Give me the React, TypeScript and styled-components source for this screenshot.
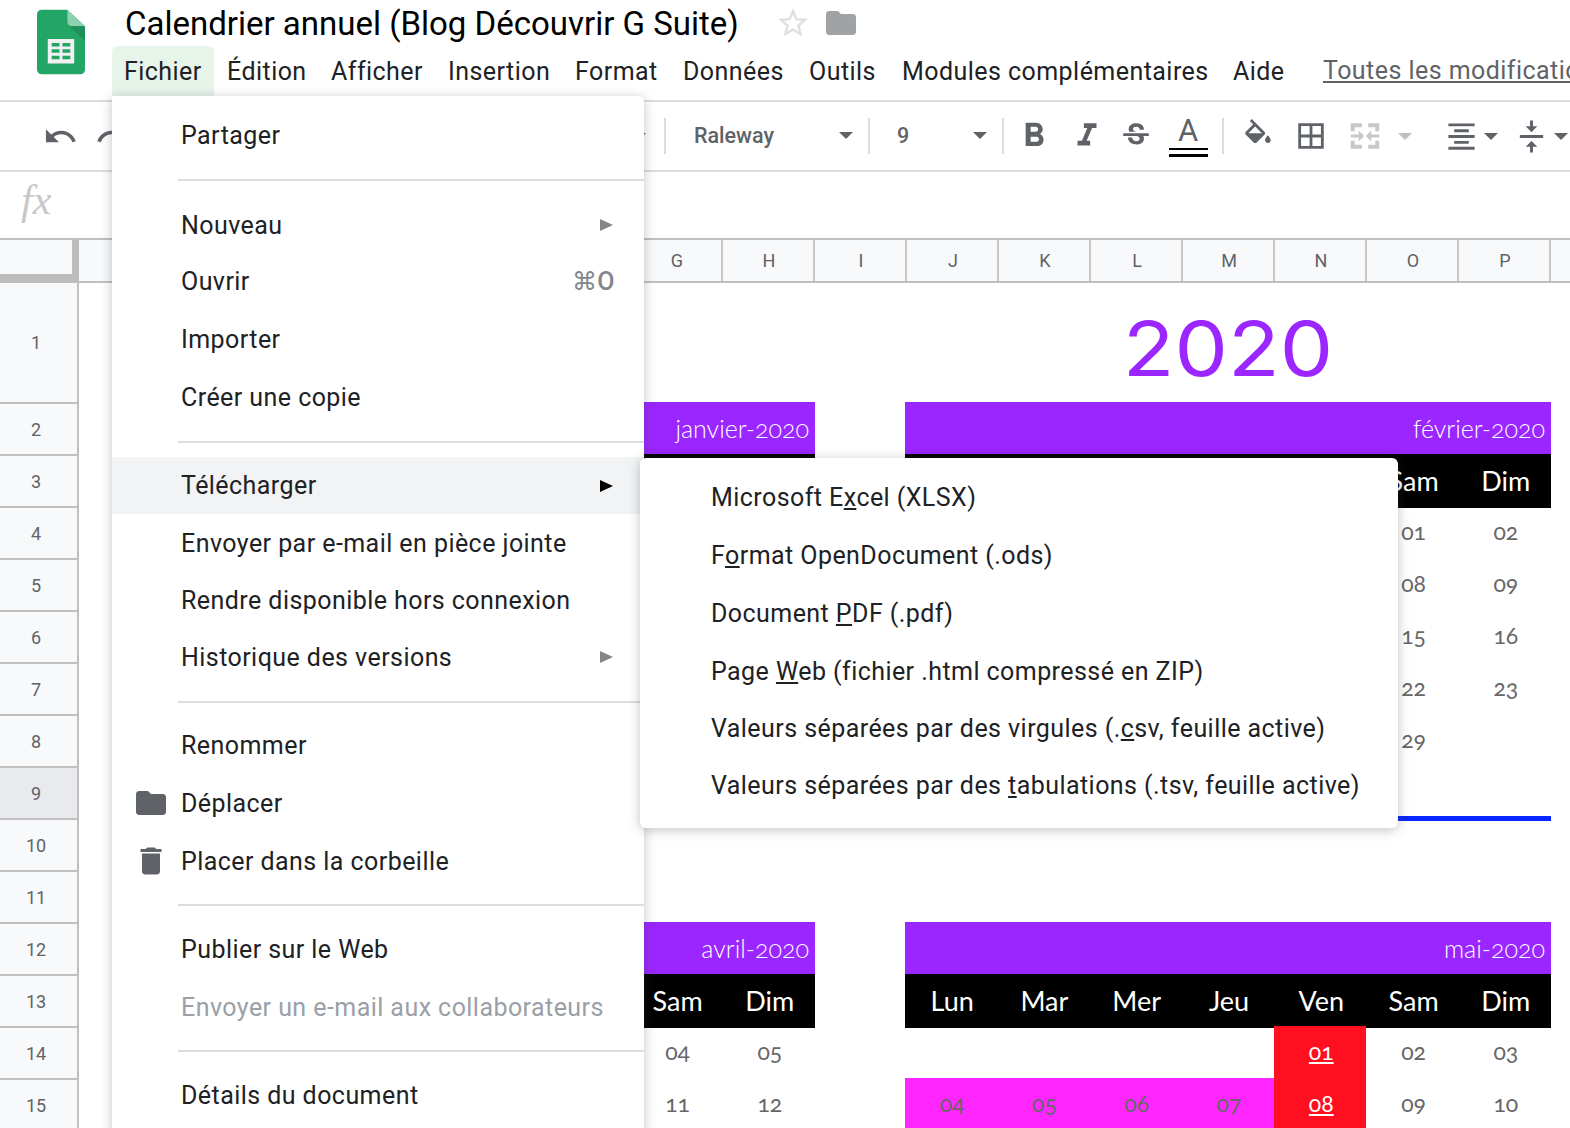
import { createGlobalStyle, styled } from "styled-components";
import {
  MdUndo,
  MdRedo,
  MdFormatBold,
  MdFormatItalic,
  MdStrikethroughS,
  MdBorderAll,
  MdFormatAlignCenter,
  MdVerticalAlignCenter,
  MdFolder,
  MdDelete,
  MdStarBorder,
} from "react-icons/md";

const GlobalStyle = createGlobalStyle`
  * { box-sizing: border-box; }
  html, body { margin: 0; padding: 0; background: #fff; overflow: hidden; }
  body { font-family: "Roboto", "Liberation Sans", sans-serif; }
`;

const Page = styled.div`
  position: relative;
  width: 1570px;
  height: 1128px;
  overflow: hidden;
  background: #fff;
`;

/* header */
const Header = styled.header`
  display: flex;
  height: 102px;
  padding-left: 37px;
  border-bottom: 2px solid #dadce0;
`;
const Logo = styled.svg`
  width: 48px;
  height: 66px;
  margin-top: 9px;
  flex: none;
`;
const HeaderBody = styled.div`
  display: flex;
  flex-direction: column;
  margin-left: 27px;
`;
const TitleRow = styled.div`
  display: flex;
  align-items: center;
  height: 46px;
  padding-left: 13px;
`;
const DocTitle = styled.div`
  font-family: "Roboto", sans-serif;
  font-size: 33px;
  color: #000;
  white-space: nowrap;
  width: 650px;
`;
const StarIcon = styled(MdStarBorder)`
  width: 36px;
  height: 36px;
  color: #e0e0e0;
  flex: none;
`;
const TitleFolder = styled(MdFolder)`
  width: 36px;
  height: 36px;
  color: #a0a3a6;
  margin-left: 12px;
  flex: none;
`;
const MenuBar = styled.nav`
  display: flex;
  align-items: center;
  height: 50px;
`;
const MenuLabel = styled.div<{ $active?: boolean; $w: number }>`
  width: ${(p) => p.$w}px;
  height: 50px;
  line-height: 52px;
  padding-left: ${(p) => (p.$active ? 12 : 11)}px;
  margin-right: ${(p) => (p.$active ? 2 : 0)}px;
  font-size: 25px;
  letter-spacing: 0.45px;
  color: #202124;
  white-space: nowrap;
  background: ${(p) => (p.$active ? "#e6f4ea" : "transparent")};
  border-radius: 6px 6px 0 0;
`;
const SavedLink = styled.div`
  margin-left: 39px;
  line-height: 54px;
  font-size: 25px;
  letter-spacing: 0.45px;
  color: #5f6368;
  text-decoration: underline;
  white-space: nowrap;
`;

/* toolbar */
const Toolbar = styled.div`
  display: flex;
  align-items: center;
  height: 70px;
  padding-left: 34px;
  border-bottom: 2px solid #dadce0;
  color: #5f6368;
`;
const ToolSlot = styled.div<{ $w: number; $ml?: number; $off?: boolean }>`
  display: flex;
  align-items: center;
  justify-content: center;
  flex: none;
  width: ${(p) => p.$w}px;
  margin-left: ${(p) => p.$ml ?? 0}px;
  color: ${(p) => (p.$off ? "#c6c8ca" : "#5f6368")};
`;
const Caret = styled.span<{ $off?: boolean }>`
  display: block;
  width: 0;
  height: 0;
  border-left: 7px solid transparent;
  border-right: 7px solid transparent;
  border-top: 7px solid ${(p) => (p.$off ? "#c0c0c0" : "#5f6368")};
`;
const Divider = styled.div<{ $ml?: number }>`
  flex: none;
  width: 2px;
  height: 36px;
  margin-left: ${(p) => p.$ml ?? 0}px;
  background: #dadce0;
`;
const SelectBox = styled.div<{ $w: number; $pl: number }>`
  display: flex;
  align-items: center;
  justify-content: space-between;
  flex: none;
  width: ${(p) => p.$w}px;
  height: 40px;
  padding: 0 15px 2px ${(p) => p.$pl}px;
  font-family: "Roboto", sans-serif;
  font-size: 21.5px;
  font-weight: 500;
  color: #5f6368;
`;
const ColorA = styled.div`
  display: flex;
  flex-direction: column;
  align-items: center;
  width: 40px;
  height: 46px;
  font-size: 31px;
  line-height: 35px;
  color: #5f6368;
`;
const ColorBar = styled.span`
  display: block;
  flex: none;
  width: 39px;
  height: 9px;
  border-top: 2px solid #000;
  border-bottom: 3px solid #000;
`;

/* formula bar */
const FormulaBar = styled.div`
  display: flex;
  align-items: center;
  height: 68px;
  padding-left: 21px;
  padding-bottom: 10px;
  border-bottom: 2px solid #c0c0c0;
`;
const Fx = styled.span`
  font-family: "Liberation Serif", serif;
  font-style: italic;
  font-size: 42px;
  color: #c8c8c8;
`;

/* grid */
const ColumnHeader = styled.div`
  display: flex;
  height: 43px;
  background: #f8f9fa;
  border-bottom: 2px solid #c0c0c0;
`;
const Corner = styled.div`
  flex: none;
  width: 79px;
  height: 43px;
  border-right: 7px solid #bdbdbd;
  border-bottom: 9px solid #bdbdbd;
`;
const ColumnCell = styled.div`
  flex: none;
  width: 92px;
  padding-left: 2px;
  text-align: center;
  line-height: 41px;
  font-size: 18px;
  color: #5f6368;
  border-right: 2px solid #c8c8c8;
`;
const SheetArea = styled.div`
  display: flex;
`;
const RowHeader = styled.div`
  flex: none;
  width: 79px;
`;
const RowCell = styled.div<{ $h: number; $selected?: boolean }>`
  display: flex;
  align-items: center;
  justify-content: center;
  height: ${(p) => p.$h}px;
  padding-right: 5px;
  font-size: 18px;
  color: #5f6368;
  background: ${(p) => (p.$selected ? "#e8eaed" : "#f8f9fa")};
  border-right: 2px solid #c0c0c0;
  border-bottom: 2px solid #c0c0c0;
`;
const Sheet = styled.div`
  display: grid;
  grid-template-columns: repeat(17, 92px);
  grid-template-rows: 120px repeat(15, 52px);
  flex: none;
  margin-left: -1px;
`;
const YearTitle = styled.div`
  grid-column: 10 / span 7;
  grid-row: 1;
  display: flex;
  align-items: center;
  justify-content: center;
  padding-top: 10px;
  font-family: "Inter", sans-serif;
  font-size: 75px;
  font-weight: 400;
  color: #9b26ff;
  transform: scaleX(1.13);
`;
const MonthBlock = styled.div<{ $col: number; $row: number; $w: number }>`
  grid-column: ${(p) => p.$col} / span 7;
  grid-row: ${(p) => p.$row} / span 5;
  align-self: start;
  justify-self: start;
  display: grid;
  grid-template-columns: repeat(7, 1fr);
  width: ${(p) => p.$w}px;
  margin: -1px 0 0 -1px;
`;
const MonthName = styled.div`
  grid-column: 1 / -1;
  height: 52px;
  padding-right: 6px;
  text-align: right;
  line-height: 52px;
  font-family: "Lato", sans-serif;
  font-size: 25px;
  font-weight: 300;
  font-feature-settings: "onum";
  color: #fff;
  background: #9b26ff;
`;
const DayName = styled.div`
  height: 54px;
  margin-bottom: -2px;
  padding-left: 2px;
  text-align: center;
  line-height: 53px;
  font-family: "Lato", sans-serif;
  font-size: 27px;
  color: #fff;
  background: #000;
`;
const DayCell = styled.div<{ $tone?: "pink" | "red" }>`
  height: 52px;
  padding-left: 2px;
  text-align: center;
  line-height: 51px;
  font-family: "Lato", sans-serif;
  font-size: 23px;
  font-feature-settings: "onum";
  color: ${(p) => (p.$tone === "red" ? "#fff" : "#666")};
  text-decoration: ${(p) => (p.$tone === "red" ? "underline" : "none")};
  background: ${(p) =>
    p.$tone === "red" ? "#ff0f1f" : p.$tone === "pink" ? "#ff26ff" : "transparent"};
`;
const BlueBar = styled.div`
  grid-column: 1 / -1;
  height: 5px;
  margin-top: -2px;
  background: #0a26ff;
`;

/* dropdowns */
const Dropdown = styled.div`
  position: absolute;
  background: #fff;
  box-shadow: 0 2px 12px rgba(60, 64, 67, 0.32);
`;
const FileMenu = styled(Dropdown)`
  left: 112px;
  top: 96px;
  width: 532px;
  height: 1100px;
  padding-top: 11px;
  border-radius: 0 6px 0 0;
`;
const DownloadMenu = styled(Dropdown)`
  left: 640px;
  top: 458px;
  width: 758px;
  height: 370px;
  padding-top: 10px;
  border-radius: 6px;
`;
const Item = styled.div<{ $h: number; $hover?: boolean; $off?: boolean }>`
  position: relative;
  display: flex;
  align-items: center;
  height: ${(p) => p.$h}px;
  padding-left: 69px;
  padding-right: 29px;
  font-size: 25px;
  letter-spacing: 0.44px;
  white-space: nowrap;
  color: ${(p) => (p.$off ? "#9aa0a6" : "#202124")};
  background: ${(p) => (p.$hover ? "#f1f3f4" : "transparent")};
`;
const SubItem = styled(Item)`
  padding-left: 71px;
`;
const ItemIcon = styled.span`
  position: absolute;
  left: 21px;
  top: 50%;
  transform: translateY(-50%);
  display: flex;
  color: #5f6368;
`;
const ItemArrow = styled.span<{ $dark?: boolean }>`
  margin-left: auto;
  margin-right: 2px;
  width: 0;
  height: 0;
  border-top: 6.500px solid transparent;
  border-bottom: 6.500px solid transparent;
  border-left: 13px solid ${(p) => (p.$dark ? "#000" : "#858585")};
`;
const Shortcut = styled.span`
  margin-left: auto;
  font-size: 25px;
  font-weight: 500;
  color: #80868b;
`;
const MenuSep = styled.div<{ $h: number }>`
  display: flex;
  align-items: center;
  height: ${(p) => p.$h}px;
  padding-left: 66px;

  &::after {
    content: "";
    display: block;
    width: 100%;
    height: 2px;
    background: #dadce0;
  }
`;

const menuLabels: [string, number][] = [
  ["Fichier", 102],
  ["Édition", 104],
  ["Afficher", 117],
  ["Insertion", 127],
  ["Format", 108],
  ["Données", 126],
  ["Outils", 93],
  ["Modules complémentaires", 331],
  ["Aide", 62],
];

const columns = "ABCDEFGHIJKLMNOPQ".split("");
const rows = Array.from({ length: 16 }, (_, i) => i + 1);
const dayNames = ["Lun", "Mar", "Mer", "Jeu", "Ven", "Sam", "Dim"];

type MenuEntry =
  | { sep: number }
  | {
      label: string;
      h: number;
      arrow?: boolean;
      hover?: boolean;
      off?: boolean;
      shortcut?: string;
      icon?: "folder" | "trash";
    };

const fileMenu: MenuEntry[] = [
  { label: "Partager", h: 56 },
  { sep: 34 },
  { label: "Nouveau", h: 56, arrow: true },
  { label: "Ouvrir", h: 57, shortcut: "⌘O" },
  { label: "Importer", h: 58 },
  { label: "Créer une copie", h: 58 },
  { sep: 31 },
  { label: "Télécharger", h: 57, arrow: true, hover: true },
  { label: "Envoyer par e-mail en pièce jointe", h: 58 },
  { label: "Rendre disponible hors connexion", h: 56 },
  { label: "Historique des versions", h: 58, arrow: true },
  { sep: 31 },
  { label: "Renommer", h: 57 },
  { label: "Déplacer", h: 58, icon: "folder" },
  { label: "Placer dans la corbeille", h: 58, icon: "trash" },
  { sep: 30 },
  { label: "Publier sur le Web", h: 58 },
  { label: "Envoyer un e-mail aux collaborateurs", h: 58, off: true },
  { sep: 30 },
  { label: "Détails du document", h: 58 },
];

const downloads: [string, string, string, number][] = [
  ["Microsoft E", "x", "cel (XLSX)", 58],
  ["F", "o", "rmat OpenDocument (.ods)", 58],
  ["Document ", "P", "DF (.pdf)", 58],
  ["Page ", "W", "eb (fichier .html compressé en ZIP)", 58],
  ["Valeurs séparées par des virgules (.", "c", "sv, feuille active)", 56],
  ["Valeurs séparées par des ", "t", "abulations (.tsv, feuille active)", 58],
];

const pad = (n: number) => String(n).padStart(2, "0");

const Month = ({
  name,
  col,
  row,
  offset,
  days,
  bar,
  weeks = 6,
}: {
  name: string;
  col: number;
  row: number;
  offset: number;
  days: number;
  bar?: boolean;
  weeks?: number;
}) => {
  const cells = Array.from({ length: weeks * 7 }, (_, i) => {
    const d = i - offset + 1;
    return d >= 1 && d <= days ? d : 0;
  });
  const isMay = name === "mai-2020";
  return (
    <MonthBlock $col={col} $row={row} $w={646}>
      <MonthName>{name}</MonthName>
      {dayNames.map((d) => (
        <DayName key={d}>{d}</DayName>
      ))}
      {cells.map((d, i) => {
        let tone: "pink" | "red" | undefined;
        if (isMay && (d === 1 || d === 8)) tone = "red";
        else if (isMay && d >= 4 && d <= 7) tone = "pink";
        return (
          <DayCell key={i} $tone={tone}>
            {d ? pad(d) : ""}
          </DayCell>
        );
      })}
      {bar && <BlueBar />}
    </MonthBlock>
  );
};

const App = () => {
  return (
    <Page>
      <GlobalStyle />
      <Header>
        <Logo viewBox="0 0 49 66">
          <path d="M5 0h26l18 17v44a5 5 0 0 1-5 5H5a5 5 0 0 1-5-5V5a5 5 0 0 1 5-5z" fill="#23a566" />
          <path d="M31 0l18 17H36a5 5 0 0 1-5-5z" fill="#8ed1b1" />
          <path d="M33 17l16 15V17z" fill="#1e8f59" />
          <path
            d="M11 30h27v25H11zM15 34v3.500h8V34zm11 0v3.500h8V34zM15 40.500v3.500h8v-3.500zm11 0v3.500h8v-3.500zM15 47v3.500h8V47zm11 0v3.500h8V47z"
            fill="#f1f1f1"
            fillRule="evenodd"
          />
        </Logo>
        <HeaderBody>
          <TitleRow>
            <DocTitle>Calendrier annuel (Blog Découvrir G Suite)</DocTitle>
            <StarIcon />
            <TitleFolder />
          </TitleRow>
          <MenuBar>
            {menuLabels.map(([label, w], i) => (
              <MenuLabel key={label} $w={w} $active={i === 0}>
                {label}
              </MenuLabel>
            ))}
            <SavedLink>Toutes les modifications ont été enregistrées</SavedLink>
          </MenuBar>
        </HeaderBody>
      </Header>

      <Toolbar>
        <ToolSlot $w={52}>
          <MdUndo size={35} />
        </ToolSlot>
        <ToolSlot $w={52}>
          <MdRedo size={35} />
        </ToolSlot>
        <ToolSlot $w={18} $ml={492}>
          <Caret />
        </ToolSlot>
        <Divider $ml={16} />
        <SelectBox $w={202} $pl={28}>
          Raleway
          <Caret />
        </SelectBox>
        <Divider />
        <SelectBox $w={132} $pl={27}>
          9
          <Caret />
        </SelectBox>
        <Divider />
        <ToolSlot $w={50} $ml={5}>
          <MdFormatBold size={40} />
        </ToolSlot>
        <ToolSlot $w={50} $ml={3}>
          <MdFormatItalic size={38} />
        </ToolSlot>
        <ToolSlot $w={50} $ml={-1}>
          <MdStrikethroughS size={34} />
        </ToolSlot>
        <ToolSlot $w={50} $ml={2}>
          <ColorA>
            A
            <ColorBar />
          </ColorA>
        </ToolSlot>
        <Divider $ml={9} />
        <ToolSlot $w={50} $ml={9}>
          <svg width="34" height="34" viewBox="0 0 24 24" fill="currentColor">
            <path d="M16.560 8.940L7.620 0 6.210 1.410l2.380 2.380-5.150 5.150c-.59.59-.59 1.540 0 2.120l5.500 5.500c.29.29.68.44 1.060.44s.77-.15 1.060-.44l5.500-5.500c.59-.58.59-1.530 0-2.120zM5.210 10L10 5.210 14.790 10H5.210zM19 11.500s-2 2.170-2 3.500c0 1.100.9 2 2 2s2-.9 2-2c0-1.330-2-3.500-2-3.500z" />
          </svg>
        </ToolSlot>
        <ToolSlot $w={50} $ml={3}>
          <MdBorderAll size={34} />
        </ToolSlot>
        <ToolSlot $w={50} $ml={4} $off>
          <svg width="38" height="38" viewBox="0 0 24 24" fill="currentColor">
            <path d="M3 4h7v2.500H5.500V9H3zM14 4h7v5h-2.500V6.500H14zM3 15h2.500v2.500H10V20H3zM18.500 15H21v5h-7v-2.500h4.500zM3 11h5V8.500l3.500 3.500L8 15.500V13H3zM21 11h-5V8.500L12.500 12l3.500 3.500V13h5z" />
          </svg>
        </ToolSlot>
        <ToolSlot $w={14} $ml={8}>
          <Caret $off />
        </ToolSlot>
        <ToolSlot $w={50} $ml={24}>
          <MdFormatAlignCenter size={35} />
        </ToolSlot>
        <ToolSlot $w={14} $ml={-2}>
          <Caret />
        </ToolSlot>
        <ToolSlot $w={50} $ml={8}>
          <MdVerticalAlignCenter size={35} />
        </ToolSlot>
        <ToolSlot $w={14} $ml={-2}>
          <Caret />
        </ToolSlot>
      </Toolbar>

      <FormulaBar>
        <Fx>fx</Fx>
      </FormulaBar>

      <ColumnHeader>
        <Corner />
        {columns.map((c) => (
          <ColumnCell key={c}>{c}</ColumnCell>
        ))}
      </ColumnHeader>

      <SheetArea>
        <RowHeader>
          {rows.map((r) => (
            <RowCell key={r} $h={r === 1 ? 121 : 52} $selected={r === 9}>
              {r}
            </RowCell>
          ))}
        </RowHeader>
        <Sheet>
          <YearTitle>2020</YearTitle>
          <Month name="janvier-2020" col={2} row={2} offset={2} days={31} />
          <Month name="février-2020" col={10} row={2} offset={5} days={29} bar />
          <Month name="avril-2020" col={2} row={12} offset={2} days={30} weeks={3} />
          <Month name="mai-2020" col={10} row={12} offset={4} days={31} weeks={3} />
        </Sheet>
      </SheetArea>

      <FileMenu>
        {fileMenu.map((entry, i) =>
          "sep" in entry ? (
            <MenuSep key={i} $h={entry.sep} />
          ) : (
            <Item key={i} $h={entry.h} $hover={entry.hover} $off={entry.off}>
              {entry.icon === "folder" && (
                <ItemIcon>
                  <MdFolder size={36} />
                </ItemIcon>
              )}
              {entry.icon === "trash" && (
                <ItemIcon>
                  <MdDelete size={36} />
                </ItemIcon>
              )}
              {entry.label}
              {entry.arrow && <ItemArrow $dark={entry.hover} />}
              {entry.shortcut && <Shortcut>{entry.shortcut}</Shortcut>}
            </Item>
          )
        )}
      </FileMenu>

      <DownloadMenu>
        {downloads.map(([before, accel, after, h]) => (
          <SubItem key={before} $h={h}>
            <span>
              {before}
              <u>{accel}</u>
              {after}
            </span>
          </SubItem>
        ))}
      </DownloadMenu>
    </Page>
  );
};

export default App;
